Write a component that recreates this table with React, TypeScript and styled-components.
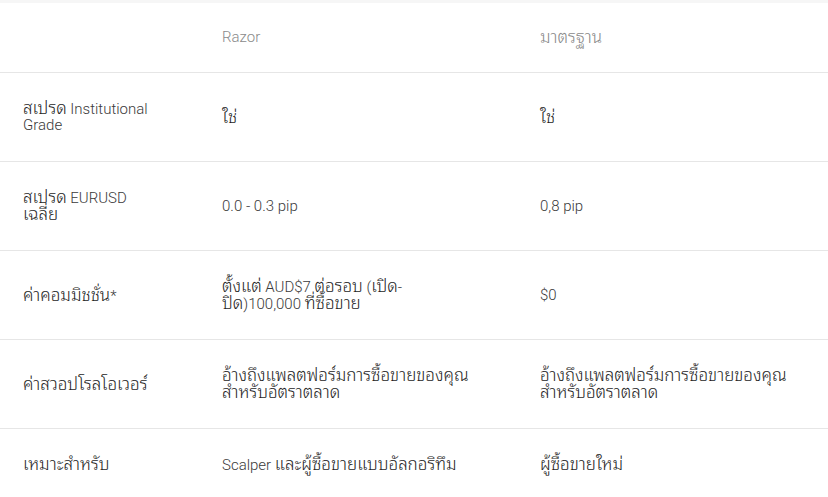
import styled, { createGlobalStyle } from 'styled-components';

const GlobalStyle = createGlobalStyle`
  html, body {
    margin: 0;
    padding: 0;
    background: #ffffff;
  }
  body {
    font-family: Roboto, Tahoma, "Noto Sans Thai Looped", Loma, Garuda, Waree, "Noto Sans Thai", "Noto Sans", sans-serif;
  }
`;

const Table = styled.div`
  width: 828px;
  border-top: 3px solid #f6f6f6;
  box-sizing: border-box;
`;

const Row = styled.div`
  display: grid;
  grid-template-columns: 199px 318px 311px;
  border-bottom: 1px solid #e6e6e6;

  &:last-child {
    border-bottom: none;
  }
`;

const Cell = styled.div<{ $header?: boolean; $label?: boolean }>`
  display: flex;
  flex-direction: column;
  justify-content: center;
  padding: ${({ $header }) => ($header ? '26px' : '27px')} ${({ $label }) => ($label ? '50px' : '23px')}
    ${({ $header }) => ($header ? '26px' : '27px')} 23px;
  font-size: 15px;
  line-height: 17px;
  color: ${({ $header }) => ($header ? '#8a8a8a' : '#3a3a3a')};
  font-weight: 300;
  min-height: 17px;
`;

const Line = styled.span`
  display: block;
  height: 17px;
  white-space: nowrap;
`;

const Thai = styled.span<{ $muted?: boolean }>`
  font-size: 17px;
  line-height: 17px;
  color: ${({ $muted }) => ($muted ? '#8a8a8a' : '#1e1e1e')};
`;

interface RowData {
  label: string[];
  razor: string[];
  standard: string[];
}

const rows: RowData[] = [
  { label: ['สเปรด Institutional', 'Grade'], razor: ['ใช่'], standard: ['ใช่'] },
  { label: ['สเปรด EURUSD', 'เฉลี่ย'], razor: ['0.0 - 0.3 pip'], standard: ['0,8 pip'] },
  {
    label: ['ค่าคอมมิชชั่น*'],
    razor: ['ตั้งแต่ AUD$7 ต่อรอบ (เปิด-', 'ปิด)100,000 ที่ซื้อขาย'],
    standard: ['$0'],
  },
  {
    label: ['ค่าสวอปโรลโอเวอร์'],
    razor: ['อ้างถึงแพลตฟอร์มการซื้อขายของคุณ', 'สำหรับอัตราตลาด'],
    standard: ['อ้างถึงแพลตฟอร์มการซื้อขายของคุณ', 'สำหรับอัตราตลาด'],
  },
  { label: ['เหมาะสำหรับ'], razor: ['Scalper และผู้ซื้อขายแบบอัลกอริทึม'], standard: ['ผู้ซื้อขายใหม่'] },
];

// Thai runs are set a little larger so the fallback Thai face takes the width of the original
const splitThai = (text: string) => text.split(/([\u0E00-\u0E7F]+(?: [\u0E00-\u0E7F]+)*)/).filter(Boolean);

const Text: React.FC<{ text: string; muted?: boolean }> = ({ text, muted }) => (
  <>
    {splitThai(text).map((part, i) =>
      /[\u0E00-\u0E7F]/.test(part) ? (
        <Thai key={i} $muted={muted}>
          {part}
        </Thai>
      ) : (
        part
      ),
    )}
  </>
);

const Lines: React.FC<{ lines: string[] }> = ({ lines }) => (
  <>
    {lines.map((line) => (
      <Line key={line}>
        <Text text={line} />
      </Line>
    ))}
  </>
);

const App: React.FC = () => (
  <>
    <GlobalStyle />
    <Table>
      <Row>
        <Cell $header $label />
        <Cell $header>
          <Line>Razor</Line>
        </Cell>
        <Cell $header>
          <Line>
            <Text text="มาตรฐาน" muted />
          </Line>
        </Cell>
      </Row>
      {rows.map((row) => (
        <Row key={row.label[0]}>
          <Cell $label>
            <Lines lines={row.label} />
          </Cell>
          <Cell>
            <Lines lines={row.razor} />
          </Cell>
          <Cell>
            <Lines lines={row.standard} />
          </Cell>
        </Row>
      ))}
    </Table>
  </>
);

export default App;
